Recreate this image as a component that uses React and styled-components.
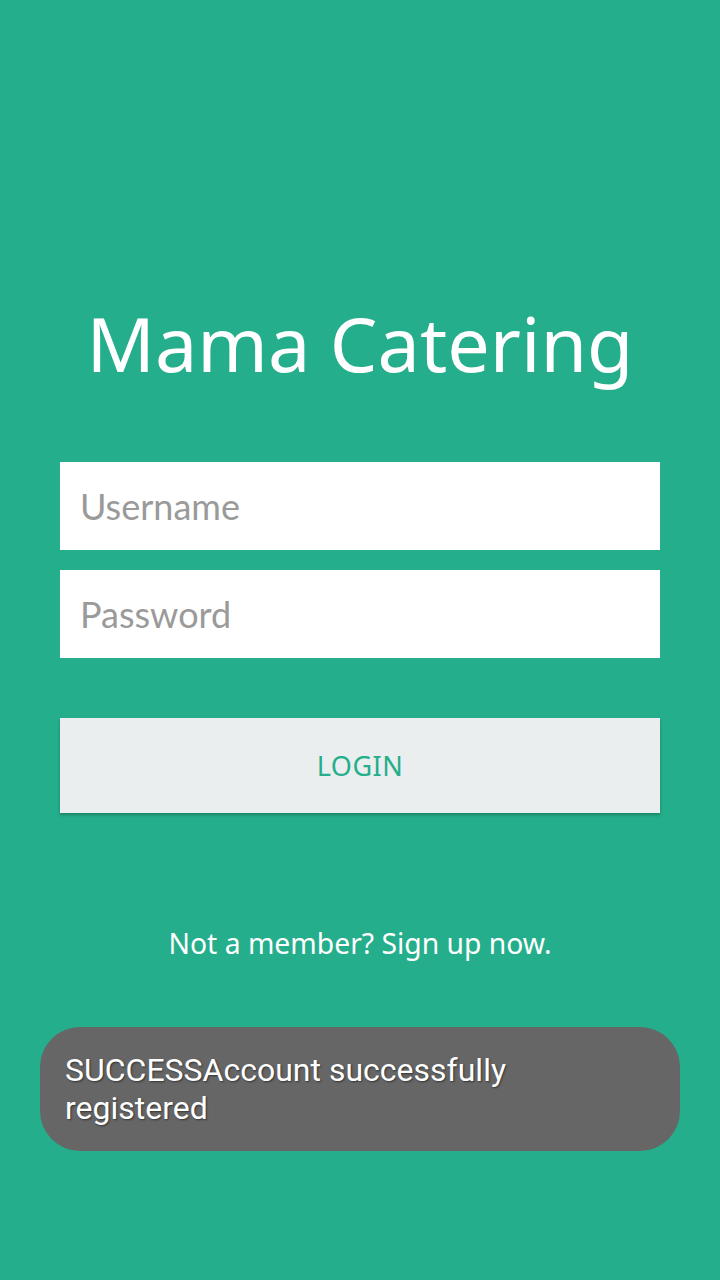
import React from 'react';
import styled, { createGlobalStyle } from 'styled-components';

const GlobalStyle = createGlobalStyle`
  html, body {
    margin: 0;
    padding: 0;
    background: #25ae8b;
  }
`;

const Page = styled.div`
  min-height: 1280px;
  width: 720px;
  background: #25ae8b;
  display: flex;
  flex-direction: column;
  align-items: center;
  box-sizing: border-box;
  padding-top: 293px;
`;

const Title = styled.h1`
  margin: 0;
  font-family: "Noto Sans", sans-serif;
  font-weight: 400;
  font-size: 75.5px;
  line-height: 100px;
  color: #fff;
`;

const Form = styled.div`
  width: 600px;
  margin-top: 69px;
  display: flex;
  flex-direction: column;
  gap: 20px;
`;

const Field = styled.input`
  height: 88px;
  border: none;
  outline: none;
  background: #fff;
  padding: 0 20px;
  font-family: "Lato", sans-serif;
  font-size: 36px;
  color: #333;
  &::placeholder {
    color: #9a9a9a;
  }
`;

const LoginButton = styled.button`
  margin-top: 40px;
  height: 95px;
  border: none;
  background: #eaeeef;
  box-shadow: 0 2px 3px rgba(0, 0, 0, 0.25);
  font-family: "Noto Sans", sans-serif;
  font-size: 27px;
  color: #25ae8b;
  letter-spacing: 0.5px;
`;

const SignUp = styled.p`
  margin: 111px 0 0;
  font-family: "Noto Sans", sans-serif;
  font-size: 28.3px;
  color: #fff;
`;

const Toast = styled.div`
  margin-top: 65px;
  width: 640px;
  box-sizing: border-box;
  background: #666;
  border-radius: 40px;
  padding: 24px 25px 24px;
  font-family: "Roboto", sans-serif;
  font-size: 32px;
  line-height: 38px;
  color: #fff;
  text-shadow: 1px 1px 2px rgba(0, 0, 0, 0.5);
`;

export default function App() {
  return (
    <>
      <GlobalStyle />
      <Page>
        <Title>Mama Catering</Title>
        <Form>
          <Field placeholder="Username" />
          <Field type="password" placeholder="Password" />
          <LoginButton>LOGIN</LoginButton>
        </Form>
        <SignUp>Not a member? Sign up now.</SignUp>
        <Toast>SUCCESSAccount successfully<br />registered</Toast>
      </Page>
    </>
  );
}
